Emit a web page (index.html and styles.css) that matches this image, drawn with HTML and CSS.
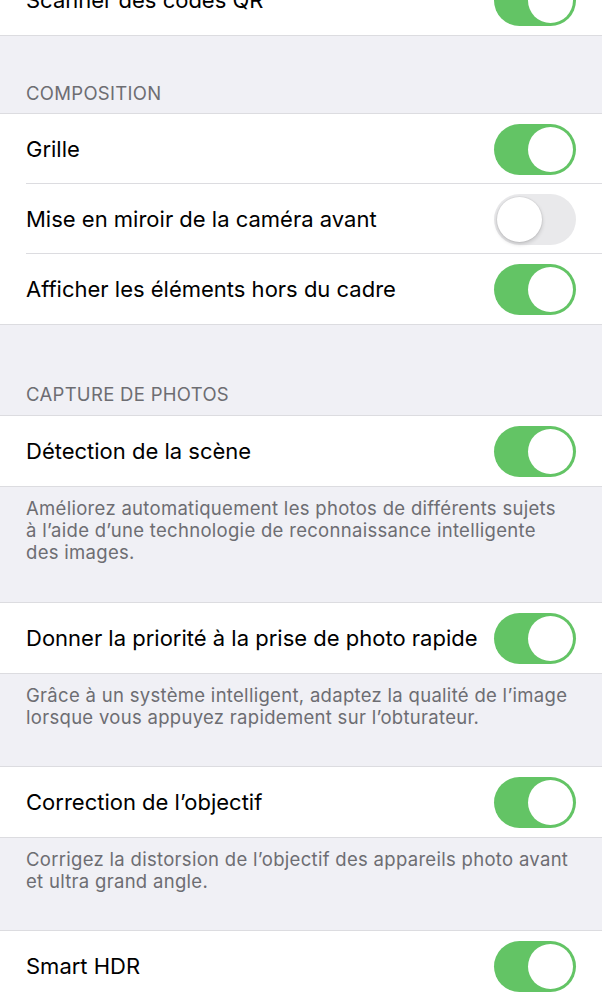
FILE: index.html
```html
<!DOCTYPE html>
<html lang="fr">
<head>
<meta charset="utf-8">
<link rel="stylesheet" href="styles.css">
</head>
<body>
<div class="page">
  <div class="group">
    <div class="row"><span class="label">Scanner des codes QR</span><span class="switch on"></span></div>
  </div>

  <div class="header first">COMPOSITION</div>
  <div class="group">
    <div class="row"><span class="label">Grille</span><span class="switch on"></span></div>
    <div class="row"><span class="label">Mise en miroir de la caméra avant</span><span class="switch"></span></div>
    <div class="row"><span class="label">Afficher les éléments hors du cadre</span><span class="switch on"></span></div>
  </div>

  <div class="header">CAPTURE DE PHOTOS</div>
  <div class="group">
    <div class="row"><span class="label">Détection de la scène</span><span class="switch on"></span></div>
  </div>
  <div class="footer">Améliorez automatiquement les photos de différents sujets à l’aide d’une technologie de reconnaissance intelligente des images.</div>

  <div class="group">
    <div class="row"><span class="label">Donner la priorité à la prise de photo rapide</span><span class="switch on"></span></div>
  </div>
  <div class="footer">Grâce à un système intelligent, adaptez la qualité de l’image lorsque vous appuyez rapidement sur l’obturateur.</div>

  <div class="group">
    <div class="row"><span class="label">Correction de l’objectif</span><span class="switch on"></span></div>
  </div>
  <div class="footer">Corrigez la distorsion de l’objectif des appareils photo avant et ultra grand angle.</div>

  <div class="group">
    <div class="row"><span class="label">Smart HDR</span><span class="switch on"></span></div>
  </div>
</div>
</body>
</html>
```

FILE: styles.css
```css
html, body {
  margin: 0;
  padding: 0;
  background: #f0f0f5;
}
body {
  font-family: Inter, Roboto, "Noto Sans", "Liberation Sans", sans-serif;
  color: #000;
  overflow: hidden;
}
.page {
  margin-top: -36px;
}
.group {
  background: #fff;
  border-top: 1px solid #dcdce0;
  border-bottom: 1px solid #dcdce0;
}
.row {
  position: relative;
  height: 70px;
  display: flex;
  align-items: center;
  justify-content: space-between;
  padding: 0 26px;
  box-sizing: border-box;
}
.row + .row::before {
  content: "";
  position: absolute;
  left: 26px;
  right: 0;
  top: -1px;
  height: 1px;
  background: #dcdce0;
}
.label {
  font-size: 22px;
}
.header {
  padding: 58px 26px 10px;
  font-size: 18.5px;
  line-height: 22px;
  letter-spacing: 0.3px;
  color: #6d6d72;
}
.header.first {
  padding-top: 46px;
  padding-bottom: 9px;
}
.footer {
  padding: 10px 33px 39px 26px;
  font-size: 18.5px;
  line-height: 22px;
  letter-spacing: 0.3px;
  color: #6d6d72;
}
.footer + .group + .footer {
  padding-bottom: 38px;
}
.switch {
  position: relative;
  flex: none;
  width: 82px;
  height: 51px;
  border-radius: 26px;
  background: #e9e9eb;
}
.switch::after {
  content: "";
  position: absolute;
  top: 3px;
  left: 3px;
  width: 45px;
  height: 45px;
  border-radius: 50%;
  background: #fff;
  box-shadow: 0 2px 4px rgba(0,0,0,0.18), 0 0 0 1px rgba(0,0,0,0.04);
}
.switch.on {
  background: #63c465;
}
.switch.on::after {
  left: 34px;
  box-shadow: none;
}
```
